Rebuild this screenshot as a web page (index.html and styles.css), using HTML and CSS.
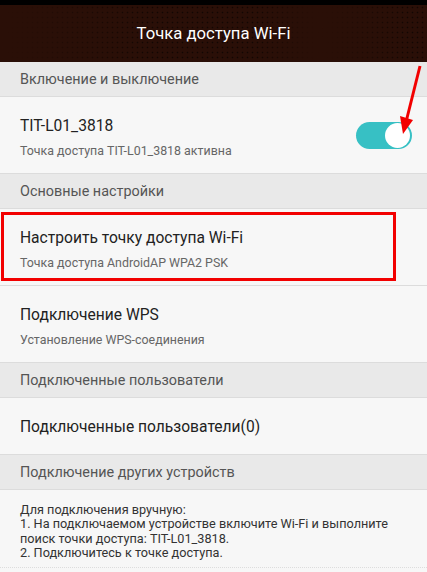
FILE: index.html
```html
<!DOCTYPE html>
<html lang="ru">
<head>
    <meta charset="UTF-8">
    <meta name="viewport" content="width=device-width, initial-scale=1.0">
    <title>Точка доступа Wi-Fi</title>
    <link rel="stylesheet" href="styles.css">
</head>
<body>

    <div class="status-bar"></div>

    <header class="app-bar">
        <h1>Точка доступа Wi-Fi</h1>
    </header>

    <div class="section">Включение и выключение</div>
    <div class="row">
        <div class="row-text">
            <div class="row-title">TIT-L01_3818</div>
            <div class="row-sub">Точка доступа TIT-L01_3818 активна</div>
        </div>
        <div class="switch"><span class="knob"></span></div>
    </div>

    <div class="section">Основные настройки</div>
    <div class="row highlighted">
        <div class="row-text">
            <div class="row-title">Настроить точку доступа Wi-Fi</div>
            <div class="row-sub">Точка доступа AndroidAP WPA2 PSK</div>
        </div>
    </div>
    <div class="row">
        <div class="row-text">
            <div class="row-title">Подключение WPS</div>
            <div class="row-sub">Установление WPS-соединения</div>
        </div>
    </div>

    <div class="section">Подключенные пользователи</div>
    <div class="row short">
        <div class="row-title">Подключенные пользователи(0)</div>
    </div>

    <div class="section">Подключение других устройств</div>
    <div class="info">
        Для подключения вручную:<br>
        1. На подключаемом устройстве включите Wi-Fi и выполните поиск точки доступа: TIT-L01_3818.<br>
        2. Подключитесь к точке доступа.
    </div>

    <!-- annotation arrow -->
    <svg class="arrow" width="30" height="80" viewBox="0 0 30 80">
        <line x1="24" y1="2" x2="10" y2="58" stroke="#f20000" stroke-width="3"/>
        <polygon points="4,52 17,56 7,70" fill="#f20000"/>
    </svg>

</body>
</html>
```

FILE: styles.css
```css
body {
    margin: 0;
    font-family: Roboto, "Noto Sans", sans-serif;
    background: #f7f7f7;
    color: #222;
    width: 427px;
    height: 572px;
    overflow: hidden;
    position: relative;
}

.status-bar {
    height: 5px;
    background: #000;
}

/* Title bar */
.app-bar {
    height: 57px;
    background-color: #2a0f07;
    background-image:
        linear-gradient(90deg, #2a0f07 0%, rgba(42,15,7,0) 35%, rgba(42,15,7,0) 60%, #2a0f07 75%, rgba(42,15,7,0) 95%),
        radial-gradient(circle, rgba(0,0,0,0.6) 0.7px, transparent 1.1px);
    background-size: 100% 100%, 5px 5px;
    display: flex;
    align-items: center;
    justify-content: center;
}

.app-bar h1 {
    margin: 0;
    font-size: 16.7px;
    font-weight: normal;
    color: #fff;
}

/* Section headers */
.section {
    height: 34px;
    background: #e9e9e9;
    border-bottom: 1px solid #dcdcdc;
    display: flex;
    align-items: center;
    padding-left: 20px;
    font-size: 14.4px;
    color: #555;
}

/* Rows */
.row {
    height: 76px;
    box-sizing: border-box;
    height: 77px;
    display: flex;
    align-items: center;
    justify-content: space-between;
    padding: 5px 15px 0 20px;
    border-bottom: 1px solid #dcdcdc;
    position: relative;
}

.row.short {
    height: 57px;
    padding-top: 2px;
}

.row-title {
    font-size: 15.6px;
    color: #222;
}

.row-sub {
    font-size: 12.4px;
    color: #666;
    margin-top: 8px;
}

.highlighted::after {
    content: "";
    position: absolute;
    left: 1px;
    top: 3px;
    width: 389px;
    height: 63px;
    border: 3px solid #f20000;
}

/* Toggle */
.switch {
    width: 56px;
    height: 27px;
    border-radius: 14px;
    background: #37c0c4;
    position: relative;
    margin-top: -5px;
}

.knob {
    position: absolute;
    right: 2px;
    top: 1px;
    width: 25px;
    height: 25px;
    border-radius: 50%;
    background: #fff;
}

/* Info text */
.info {
    padding: 13px 20px 0 20px;
    font-size: 12.7px;
    line-height: 14.3px;
    color: #333;
    height: 64px;
    border-bottom: 1px dotted #ddd;
}

.arrow {
    position: absolute;
    left: 396px;
    top: 64px;
}
```
